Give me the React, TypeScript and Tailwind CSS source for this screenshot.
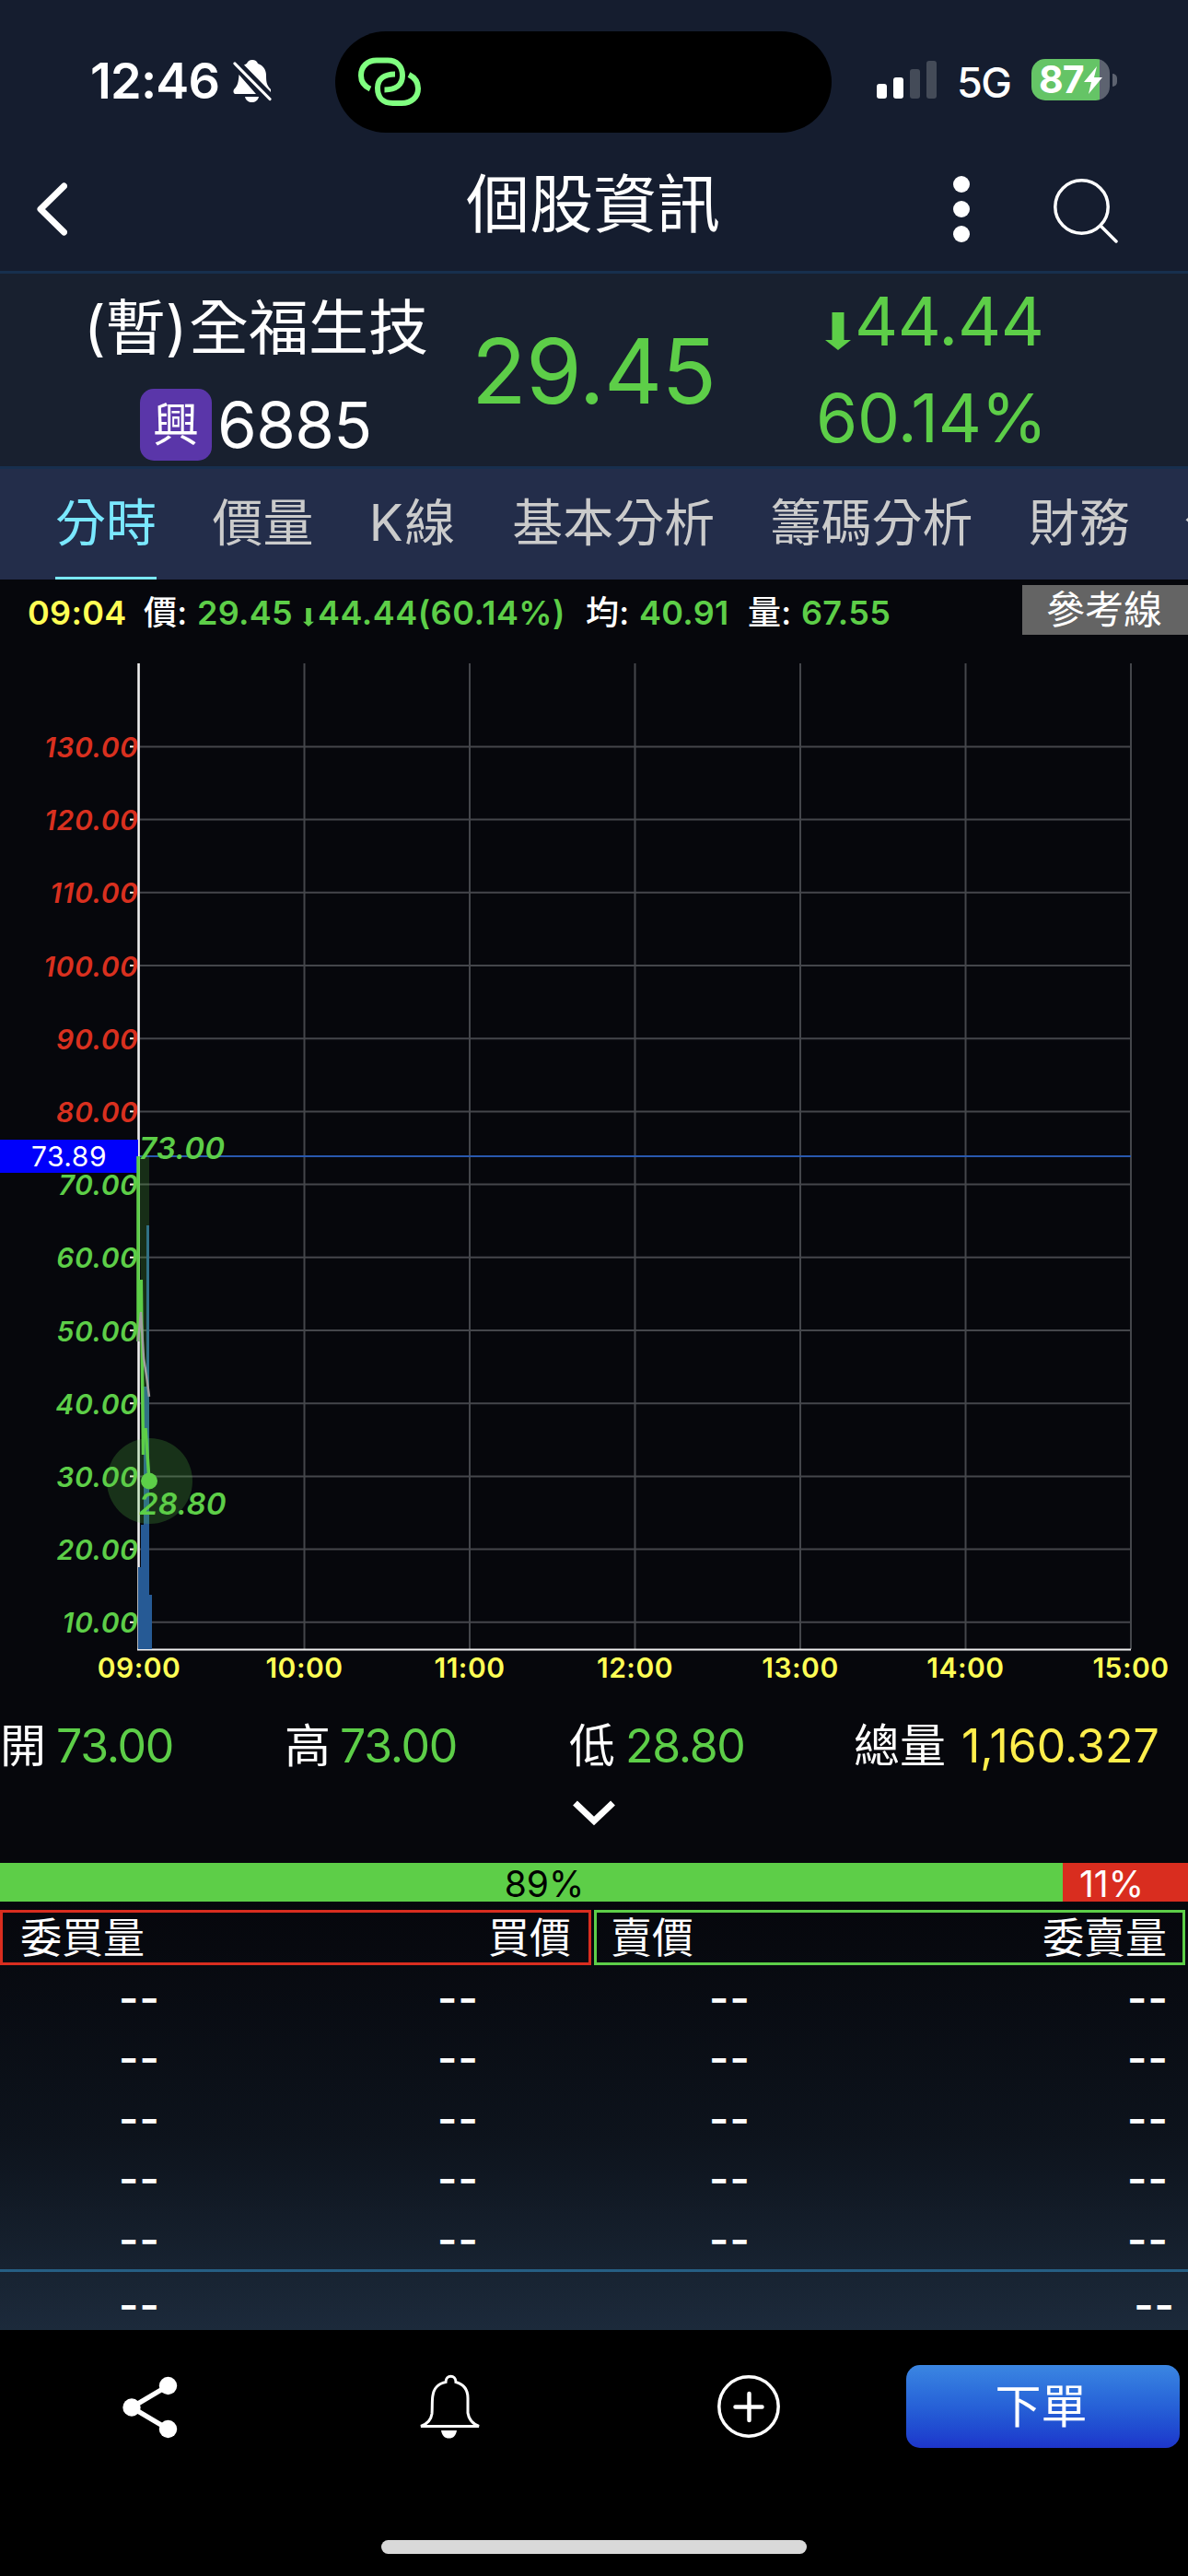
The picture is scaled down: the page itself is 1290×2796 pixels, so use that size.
import { clsx } from "clsx";

const UP = "#d9301f";
const DOWN = "#5dce48";

const tabs = ["分時", "價量", "K線", "基本分析", "籌碼分析", "財務", "公告"];
const hours = ["09:00", "10:00", "11:00", "12:00", "13:00", "14:00", "15:00"];
const prices = [130, 120, 110, 100, 90, 80, 70, 60, 50, 40, 30, 20, 10];

const volumes = [
  { x: 150, top: 1701 },
  { x: 153, top: 1655 },
  { x: 156, top: 1505 },
  { x: 159, top: 1330 },
  { x: 162, top: 1731 },
];

const DownArrow = ({ className }: { className: string }) => (
  <svg viewBox="0 0 28 41" preserveAspectRatio="none" className={className} fill={DOWN}>
    <path d="M7.5 0h13v30H28L14 41 0 30h7.5z" />
  </svg>
);

const StatusBar = () => (
  <div className="flex h-[172px] items-start">
    <div className="flex w-[364px] items-center pt-[64px] pl-[98px]">
      <span className="w-[155px] text-[54px] leading-[48px] font-semibold tracking-[-0.800px]">12:46</span>
      <svg viewBox="0 0 42 46" className="h-[46px] w-[42px]" fill="white">
        <path d="M21 0c3 0 5 1.500 6 4 6 2 9 7 9 13 0 8 1 11 5 15v3L12 5.500C13.500 4.600 15 4 15 4c1-2.500 3-4 6-4z" />
        <path d="M6.500 16L25 37H2.500C0 37 0 33 1.500 31.500 5 28 6 24 6.500 16z" />
        <path d="M13 40h15c-1 4-4 6-7.500 6S14 44 13 40z" />
        <path d="M2 4l38 38.500" stroke="white" strokeWidth="3.200" strokeLinecap="round" />
      </svg>
    </div>
    <div className="mt-[34px] flex h-[110px] w-[539px] items-center rounded-full bg-black pl-[25px]">
      <svg viewBox="0 0 68 54" className="h-[54px] w-[68px]" fill="none" stroke="#80ff80" strokeWidth="6">
        <path d="M13 34.500C6.500 31.500 3 26.500 3 20 3 10 10 3.500 20 3.500h12C42 3.500 48 10 48 20c0 10-7 15.500-19.500 15.500" />
        <path d="M40 18.500C28 18.500 21 24 21 33.500 21 44 27 50 37.500 50h9.500c11 0 18-6.500 18-16 0-7-4-12-10-15" />
      </svg>
    </div>
    <div className="flex pt-[64px] pl-[49px]">
      <div className="flex h-[43px] items-end gap-[7px]">
        <div className="h-[16px] w-[11px] rounded-[3px] bg-white" />
        <div className="h-[23px] w-[11px] rounded-[3px] bg-white" />
        <div className="h-[32px] w-[11px] rounded-[3px] bg-[#444b58]" />
        <div className="h-[41px] w-[11px] rounded-[3px] bg-[#444b58]" />
      </div>
      <span className="mt-[3px] ml-[22px] w-[81px] text-[45px] leading-[46px] font-medium tracking-[-1.500px]">5G</span>
      <div className="flex h-[45px] w-[85px] items-center rounded-[15px] bg-linear-to-r from-[#65c466] from-87% to-[#5d6370] to-87% pl-[8px]">
        <span className="text-[41px] leading-none font-bold tracking-[-1px]">87</span>
        <svg viewBox="0 0 20 30" className="h-[30px] w-[20px]" fill="white">
          <path d="M14 0L0 17h8L5 30 20 12h-9z" />
        </svg>
      </div>
      <div className="mt-[16px] ml-[3px] h-[14px] w-[5px] rounded-r-full bg-[#5d6370]" />
    </div>
  </div>
);

const TitleBar = () => (
  <div className="flex h-[125px] border-b-[3px] border-[#172f4e]">
    <svg viewBox="0 0 33 58" className="mt-[26px] ml-[40px] h-[58px] w-[33px]" fill="none" stroke="white" strokeWidth="7" strokeLinecap="round" strokeLinejoin="round">
      <path d="M29.500 4L4 29l25.500 25" />
    </svg>
    <h1 className="ml-[433px] w-[529px] text-[69px] leading-[100px] font-normal">個股資訊</h1>
    <svg viewBox="0 0 18 72" className="mt-[19px] h-[72px] w-[18px]" fill="white">
      <circle cx="9" cy="9" r="9" />
      <circle cx="9" cy="36" r="9" />
      <circle cx="9" cy="63" r="9" />
    </svg>
    <svg viewBox="0 0 70 70" className="mt-[22px] ml-[91px] h-[70px] w-[70px]" fill="none" stroke="white" strokeWidth="3.500">
      <circle cx="30.500" cy="30.500" r="28.700" />
      <path d="M51 51l17 17" strokeLinecap="round" />
    </svg>
  </div>
);

const Quote = () => (
  <div className="flex h-[212px] border-b-[3px] border-[#172f4e] bg-[#18202f]">
    <div className="w-[512px]">
      <div className="mt-[26px] ml-[91px] flex h-[66px] text-[65px] leading-[66px] whitespace-nowrap">
        <span className="w-[114px]">(暫)</span>
        <span>全福生技</span>
      </div>
      <div className="mt-[33px] ml-[152px] flex h-[78px] items-center">
        <span className="flex h-[78px] w-[78px] items-center justify-center rounded-[15px] bg-[#5a36a9] text-[50px] leading-none">興</span>
        <span className="ml-[6px] text-[69px] leading-[76px] tracking-[-0.600px]">6885</span>
      </div>
    </div>
    <div className="w-[374px] pt-[54px] text-[98px] leading-[104px] tracking-[-0.800px] text-[#5dce48]">29.45</div>
    <div className="text-[73px] tracking-[-0.300px] text-[#5dce48]">
      <div className="mt-[19px] flex h-[66px] items-center leading-[66px]">
        <DownArrow className="mt-[20px] mr-[4px] ml-[10px] h-[41px] w-[28px]" />
        <span>44.44</span>
      </div>
      <div className="mt-[39px] leading-[66px]">60.14%</div>
    </div>
  </div>
);

const Tabs = () => (
  <div className="flex h-[120px] gap-[60.400px] overflow-hidden bg-[#232d4a] pl-[60px] text-[55px] whitespace-nowrap text-[#cbcbcb]">
    {tabs.map((tab, i) => (
      <div key={tab} className={clsx("shrink-0 border-b-[3px] pt-[28px] leading-[60px] last:-ml-[2px]", i === 0 ? "border-[#7ae8ff] text-[#7ae8ff]" : "border-transparent", tab === "K線" && "tracking-[1.500px]")}>
        {tab}
      </div>
    ))}
  </div>
);

const InfoLine = () => (
  <div className="flex h-[66px] justify-between pt-[6px]">
    <div className="flex pt-[10px] pl-[30px] text-[36px] leading-[40px] font-semibold tracking-[0.300px] whitespace-nowrap text-[#5dce48]">
      <span className="w-[126px] text-[#ffff55]">09:04</span>
      <span className="w-[58px] font-medium text-white">價:</span>
      <span className="w-[115px]">29.45</span>
      <DownArrow className="mt-[15px] mr-[4px] h-[20px] w-[12px]" />
      <span className="w-[291px] tracking-[0.500px]">44.44(60.14%)</span>
      <span className="w-[58px] font-medium text-white">均:</span>
      <span className="w-[118px]">40.91</span>
      <span className="w-[58px] font-medium text-white">量:</span>
      <span>67.55</span>
    </div>
    <div className="h-[54px] w-[180px] bg-[#646464] pl-[26px] text-[42px] leading-[54px]">參考線</div>
  </div>
);

const Chart = () => (
  <svg viewBox="0 695 1290 1145" className="block h-[1145px] w-[1290px]">
    {/* grid */}
    {prices.map((p) => {
      const y = 1840 - p * 7.92;
      return <line key={p} x1="150" x2="1228" y1={y} y2={y} stroke="#44464b" strokeWidth="2" />;
    })}
    {hours.map((h, i) => (
      <line key={h} x1={151 + i * 179.5} x2={151 + i * 179.5} y1="720" y2="1790" stroke="#44464b" strokeWidth="2" />
    ))}
    <line x1="150" x2="1228" y1="1255" y2="1255" stroke="#2858ae" strokeWidth="2" />
    <line x1="150.500" x2="150.500" y1="720" y2="1791" stroke="#f0f0f0" strokeWidth="2.500" />
    <line x1="149" x2="1228" y1="1790.500" y2="1790.500" stroke="#f0f0f0" strokeWidth="2" />

    {/* price scale */}
    {prices.map((p) => {
      const y = 1840 - p * 7.92;
      return (
        <g key={p}>
          <line x1="141" x2="148" y1={y} y2={y} stroke="white" strokeWidth="2" />
          <text x="150.500" y={y + 11.5} textAnchor="end" fontSize="30" fontStyle="italic" fontWeight="600" letterSpacing="0.6" fill={p > 73.89 ? UP : DOWN}>
            {p.toFixed(2)}
          </text>
        </g>
      );
    })}
    <rect x="0" y="1237" width="150" height="36" fill="#0000fb" />
    <text x="75" y="1266" textAnchor="middle" fontSize="30" letterSpacing="0.5" fill="white">73.89</text>

    {/* volume */}
    {volumes.map((v) => (
      <rect key={v.x} x={v.x} y={v.top} width="3" height={1790 - v.top} fill="#265a95" />
    ))}

    {/* price */}
    <path d="M150 1255H162V1607L158 1550 155 1579 153 1389z" fill="#5dce48" fillOpacity="0.2" />
    <path d="M150 1255V1456M153.300 1389L155.500 1579M158 1550L162 1607" fill="none" stroke={DOWN} strokeWidth="3.500" />
    <path d="M150 1400L153.300 1389V1440L150 1456z" fill={DOWN} />
    <path d="M150 1456L153 1424 156 1474 159 1493 162 1516" fill="none" stroke="#a0a0a0" strokeWidth="2.500" />
    <circle cx="162.500" cy="1607.500" r="46.500" fill="#5dce48" fillOpacity="0.22" />
    <circle cx="162" cy="1607.500" r="9" fill={DOWN} />
    <g fontSize="33" fontStyle="italic" fontWeight="600" letterSpacing="0.3" fill={DOWN}>
      <text x="151" y="1258">73.00</text>
      <text x="151" y="1644">28.80</text>
    </g>

    {/* time scale */}
    {hours.map((h, i) => (
      <text key={h} x={151 + i * 179.5} y="1820.500" textAnchor="middle" fontSize="30" fontWeight="600" letterSpacing="0.5" fill="#ffff55">
        {h}
      </text>
    ))}
  </svg>
);

const Summary = () => (
  <div className="h-[182px]">
    <div className="flex pt-[23px] text-[50px] leading-[64px] tracking-[-1.300px] whitespace-nowrap text-[#5dce48]">
      <span className="w-[61px] text-white">開</span>
      <span className="w-[248px]">73.00</span>
      <span className="w-[60px] text-white">高</span>
      <span className="w-[249px]">73.00</span>
      <span className="w-[61px] text-white">低</span>
      <span className="w-[248px]">28.80</span>
      <span className="w-[117px] tracking-normal text-white">總量</span>
      <span className="tracking-normal text-[#fdee4c]">1,160.327</span>
    </div>
    <svg viewBox="0 0 46 28" className="mx-auto mt-[27px] h-[28px] w-[46px]" fill="none" stroke="white" strokeWidth="7">
      <path d="M2.500 3L23 22.500 43.500 3" />
    </svg>
  </div>
);

const Ratio = () => (
  <div className="flex h-[42px] text-[39px] leading-[46px]">
    <div className="w-[1154px] bg-[#5dce48] pl-[28px] text-center text-black">89%</div>
    <div className="flex-1 bg-[#d92d1f] pr-[30px] text-center">11%</div>
  </div>
);

const OrderBook = () => (
  <div className="h-[465px] pt-[9px]">
    <div className="flex gap-[3px] text-[45px] leading-[56px]">
      <div className="flex h-[60px] w-[642px] justify-between border-[3px] border-[#d92d1f] px-[19px]">
        <span>委買量</span>
        <span>買價</span>
      </div>
      <div className="flex h-[60px] w-[642px] justify-between border-[3px] border-[#5dce48] pr-[17px] pl-[15px]">
        <span>賣價</span>
        <span>委賣量</span>
      </div>
    </div>
    <div className="h-[333px] border-b-[3px] border-[#265f84] pt-[2px]">
      {[0, 1, 2, 3, 4].map((row) => (
        <div key={row} className="flex h-[65.500px] items-center text-[46px] leading-none font-semibold tracking-[1px]">
          <span className="w-[346px] pl-[129px]">--</span>
          <span className="w-[295px] pl-[129px]">--</span>
          <span className="w-[454px] pl-[129px]">--</span>
          <span className="pl-[129px]">--</span>
        </div>
      ))}
    </div>
    <div className="flex h-[66px] items-center justify-between pt-[4px] pr-[14px] pl-[129px] text-[46px] leading-none font-semibold tracking-[1px]">
      <span>--</span>
      <span>--</span>
    </div>
  </div>
);

const BottomBar = () => (
  <div className="h-[267px] bg-black">
    <div className="flex h-[228px] pt-[38px]">
      <svg viewBox="0 0 60 68" className="mt-[12px] ml-[133px] h-[68px] w-[60px]" fill="white">
        <path d="M49.500 10.500L10 34l39.500 23.500" fill="none" stroke="white" strokeWidth="5.500" />
        <circle cx="49.500" cy="10.500" r="9.700" />
        <circle cx="10" cy="34" r="9.700" />
        <circle cx="49.500" cy="57.500" r="9.700" />
      </svg>
      <svg viewBox="0 0 70 70" className="mt-[10px] ml-[261px] h-[70px] w-[70px]" fill="none" stroke="white" strokeWidth="3">
        <path d="M30 8.500C30 0 41 0 41 8.500 50 11 54 17 54 26V42C55 49 60 54 66 56.500H3C10 54 14 50 15 43 15.500 38 15 30 15.800 24 17 15 21 10.500 30 8.500z" />
        <path d="M25 61h17c-1 6-4 8.500-8.500 8.500S26 67 25 61z" fill="white" stroke="none" />
      </svg>
      <svg viewBox="0 0 70 70" className="mt-[10px] ml-[254px] h-[70px] w-[70px]" fill="none" stroke="white" strokeWidth="3.500">
        <circle cx="35" cy="35" r="32.200" />
        <path d="M20.500 35.500h29M35.500 21v29" strokeWidth="4.500" strokeLinecap="round" />
      </svg>
      <button className="ml-[136px] h-[90px] w-[297px] rounded-[15px] bg-linear-to-b from-[#3b86e2] to-[#1e35cb] pr-[4px] text-[50px] leading-[90px]">下單</button>
    </div>
    <div className="mx-auto h-[15px] w-[462px] rounded-full bg-[#d9d9d9]" />
  </div>
);

export default function App() {
  return (
    <div className="h-[2796px] w-[1290px] overflow-hidden bg-[#06070c] font-['Inter','Noto_Sans_CJK_TC',sans-serif] text-white">
      <div className="bg-[#151d2f]">
        <StatusBar />
        <TitleBar />
      </div>
      <Quote />
      <Tabs />
      <InfoLine />
      <Chart />
      <Summary />
      <Ratio />
      <div className="bg-linear-to-b from-[#06070c] via-[#0d131c] via-55% to-[#1c2a3b]">
        <OrderBook />
      </div>
      <BottomBar />
    </div>
  );
}
